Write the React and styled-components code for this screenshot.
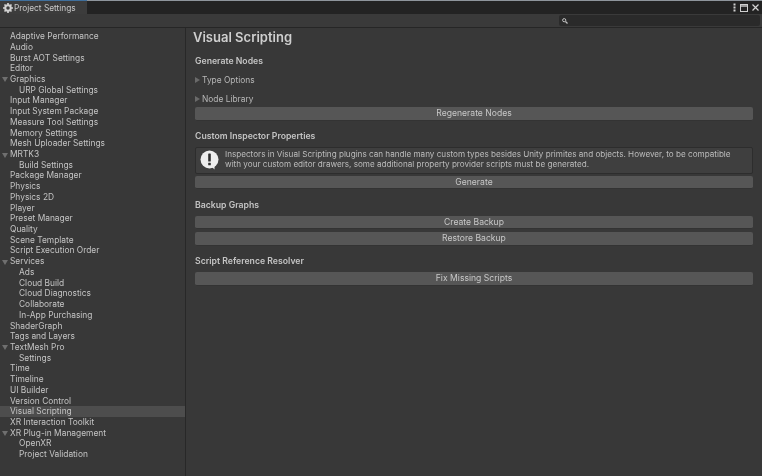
import React from "react";
import styled, { createGlobalStyle } from "styled-components";

const Global = createGlobalStyle`
  html, body { margin: 0; padding: 0; background: #383838; }
  body { font-family: Inter, "Noto Sans", sans-serif; }
  * { box-sizing: border-box; }
`;
const Window = styled.div`
  width: 762px; height: 476px; display: flex; flex-direction: column;
  background: #383838; color: #c4c4c4; overflow: hidden;
  font-size: 8.4px;
  filter: blur(0.35px);
`;
const TabBar = styled.div`
  height: 14px; flex: none; display: flex; align-items: stretch;
  justify-content: space-between; background: #232323;
  border-top: 1px solid #8e959c;
`;
const Tab = styled.div`
  width: 87px; display: flex; align-items: center; gap: 1px; padding-left: 3px;
  background: #3c3c3c; color: #c8c8c8; font-size: 8.3px;
  border-top: 1px solid #3f6f9c; margin-top: -1px;
`;
const WinControls = styled.div`
  display: flex; align-items: center; gap: 4px; padding-right: 3px; color: #cfcfcf;
`;
const Toolbar = styled.div`
  height: 14px; flex: none; display: flex; justify-content: flex-end; align-items: center;
  background: #3a3a3a; border-bottom: 1px solid #262626; padding-right: 2px;
`;
const Search = styled.div`
  width: 201px; height: 11px; background: #2a2a2a; border-radius: 2px;
  display: flex; align-items: center; padding-left: 3px;
`;
const Body = styled.div`
  flex: 1; display: flex; min-height: 0;
`;
const Sidebar = styled.nav`
  width: 186px; flex: none; padding-top: 3.1px; background: #383838;
  border-right: 1px solid #282828;
`;
const Row = styled.div`
  height: 10.72px; line-height: 10.72px; white-space: nowrap; position: relative;
  padding-left: ${p => (p.$child ? 19 : 10)}px;
  background: ${p => (p.$active ? "#4d4d4d" : "transparent")};
`;
const Caret = styled.span`
  position: absolute; left: 2px; top: 3.5px; width: 0; height: 0;
  border-left: 3px solid transparent; border-right: 3px solid transparent;
  border-top: 5px solid #6f6f6f;
`;
const Main = styled.main`
  flex: 1; min-width: 0; padding: 0 9px 0 7px; display: flex; flex-direction: column;
`;
const Title = styled.h1`
  margin: 1px 0 0; font-size: 13px; font-weight: 600; color: #cfcfcf;
  line-height: 17px; height: 21px;
`;
const Section = styled.h2`
  margin: ${p => p.$top}px 0 0 2px; font-size: 8.7px; font-weight: 600; color: #c4c4c4;
  line-height: 11px;
`;
const Foldout = styled.div`
  display: flex; align-items: center; gap: 2px; height: 11px; margin-top: ${p => p.$top}px;
  margin-left: 2px; color: #b8b8b8;
`;
const FoldCaret = styled.span`
  width: 0; height: 0; border-top: 3px solid transparent; border-bottom: 3px solid transparent;
  border-left: 5px solid #6a6a6a;
`;
const Button = styled.div`
  height: 13.5px; flex: none; margin: ${p => p.$top ?? 0}px 0 0 2px;
  background: #565656; border-radius: 2px; border-bottom: 1px solid #333;
  display: flex; align-items: center; justify-content: center;
  color: #c8c8c8; font-size: 8.6px;
`;
const HelpBox = styled.div`
  height: 27px; margin: 4.5px 0 0 2px; background: #3f3f3f; border: 1px solid #2d2d2d;
  border-radius: 2px; display: flex; align-items: center; padding-left: 4px; gap: 6px;
`;
const WarnSlot = styled.span`
  flex: none; display: flex;
`;
const HelpText = styled.div`
  font-size: 8.13px; line-height: 10px; color: #bdbdbd; white-space: nowrap;
  margin-bottom: 3px;
`;

const Gear = () => (
  <svg width="10" height="10" viewBox="0 0 20 20" fill="none">
    <circle cx="10" cy="10" r="5.5" stroke="#d2d2d2" strokeWidth="4" />
    <g stroke="#d2d2d2" strokeWidth="3.4">
      <path d="M10 0v4M10 16v4M0 10h4M16 10h4M3 3l3 3M14 14l3 3M17 3l-3 3M6 14l-3 3" />
    </g>
  </svg>
);
const Kebab = () => (
  <svg width="3" height="9" viewBox="0 0 3 9"><g fill="#d0d0d0"><rect x="0.5" y="0.5" width="2" height="2"/><rect x="0.5" y="3.5" width="2" height="2"/><rect x="0.5" y="6.5" width="2" height="2"/></g></svg>
);
const Maximize = () => (
  <svg width="8" height="8" viewBox="0 0 8 8" fill="none" stroke="#cfcfcf"><rect x="0.5" y="0.5" width="7" height="7"/><path d="M0 2h8" strokeWidth="1.4"/></svg>
);
const Close = () => (
  <svg width="7" height="7" viewBox="0 0 7 7" stroke="#d4d4d4" strokeWidth="1.2"><path d="M0.5 0.5l6 6M6.5 0.5l-6 6"/></svg>
);
const SearchIcon = () => (
  <svg width="6" height="6" viewBox="0 0 6 6" fill="none" stroke="#c0c0c0"><circle cx="2.2" cy="2.2" r="1.6"/><path d="M3.5 3.5l2 2" strokeWidth="1.3"/></svg>
);
const Warn = () => (
  <svg width="19" height="20" viewBox="0 0 19 20">
    <circle cx="9.5" cy="9.5" r="9" fill="#eeeeee" />
    <path d="M11 16l3.5 3.5 0-5z" fill="#eeeeee" />
    <rect x="8.2" y="3.5" width="2.6" height="8" rx="0.6" fill="#2f2f2f" />
    <rect x="8.2" y="12.7" width="2.6" height="2.6" rx="0.4" fill="#2f2f2f" />
  </svg>
);

const items = [
  ["Adaptive Performance"], ["Audio"], ["Burst AOT Settings"], ["Editor"],
  ["Graphics", "p"], ["URP Global Settings", "c"], ["Input Manager"], ["Input System Package"],
  ["Measure Tool Settings"], ["Memory Settings"], ["Mesh Uploader Settings"], ["MRTK3", "p"],
  ["Build Settings", "c"], ["Package Manager"], ["Physics"], ["Physics 2D"], ["Player"],
  ["Preset Manager"], ["Quality"], ["Scene Template"], ["Script Execution Order"],
  ["Services", "p"], ["Ads", "c"], ["Cloud Build", "c"], ["Cloud Diagnostics", "c"],
  ["Collaborate", "c"], ["In-App Purchasing", "c"], ["ShaderGraph"], ["Tags and Layers"],
  ["TextMesh Pro", "p"], ["Settings", "c"], ["Time"], ["Timeline"], ["UI Builder"],
  ["Version Control"], ["Visual Scripting", "a"], ["XR Interaction Toolkit"],
  ["XR Plug-in Management", "p"], ["OpenXR", "c"], ["Project Validation", "c"],
];

export default function App() {
  return (
    <Window>
      <Global />
      <TabBar>
        <Tab><Gear />Project Settings</Tab>
        <WinControls><Kebab /><Maximize /><Close /></WinControls>
      </TabBar>
      <Toolbar><Search><SearchIcon /></Search></Toolbar>
      <Body>
        <Sidebar>
          {items.map(([label, kind]) => (
            <Row key={label} $child={kind === "c"} $active={kind === "a"}>
              {kind === "p" && <Caret />}
              {label}
            </Row>
          ))}
        </Sidebar>
        <Main>
          <Title>Visual Scripting</Title>
          <Section $top={6}>Generate Nodes</Section>
          <Foldout $top={7}><FoldCaret />Type Options</Foldout>
          <Foldout $top={8}><FoldCaret />Node Library</Foldout>
          <Button $top={3}>Regenerate Nodes</Button>
          <Section $top={10.5}>Custom Inspector Properties</Section>
          <HelpBox>
            <WarnSlot><Warn /></WarnSlot>
            <HelpText>
              Inspectors in Visual Scripting plugins can handle many custom types besides Unity primites and objects. However, to be compatible<br />
              with your custom editor drawers, some additional property provider scripts must be generated.
            </HelpText>
          </HelpBox>
          <Button $top={2}>Generate</Button>
          <Section $top={10.5}>Backup Graphs</Section>
          <Button $top={5}>Create Backup</Button>
          <Button $top={3}>Restore Backup</Button>
          <Section $top={10.5}>Script Reference Resolver</Section>
          <Button $top={5}>Fix Missing Scripts</Button>
        </Main>
      </Body>
    </Window>
  );
}
